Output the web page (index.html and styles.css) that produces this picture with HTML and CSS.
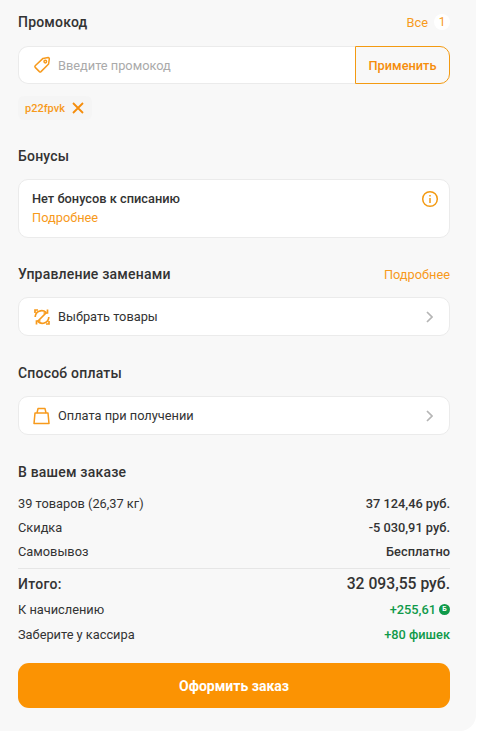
FILE: index.html
```html
<!DOCTYPE html>
<html lang="ru">
<head>
	<meta charset="UTF-8">
	<title>Заказ</title>
	<link rel="stylesheet" href="styles.css">
</head>
<body>
	<div class="panel">
		<div class="head head-promo">
			<span class="title">Промокод</span>
			<span class="all">Все <span class="count">1</span></span>
		</div>
		<div class="promo">
			<div class="promo-input">
				<svg class="icon" width="18" height="18" viewBox="0 0 18 18" fill="none" stroke="#f79a1c" stroke-width="1.5" stroke-linejoin="round"><path d="M10 2.4 L15.2 1.6 Q16.4 1.6 16.3 2.8 L15.6 8 L8 15.6 Q7.2 16.3 6.4 15.6 L2.2 11.4 Q1.5 10.6 2.2 9.8 Z"/><circle cx="12.3" cy="5.6" r="1.3"/></svg>
				<span class="placeholder">Введите промокод</span>
			</div>
			<div class="promo-btn">Применить</div>
		</div>
		<div class="chips">
			<div class="chip">
				<span>p22fpvk</span>
				<svg width="12" height="12" viewBox="0 0 12 12" fill="none" stroke="#f58d0b" stroke-width="1.8"><path d="M1 1 L11 11 M11 1 L1 11"/></svg>
			</div>
		</div>

		<div class="head head-bonus"><span class="title">Бонусы</span></div>
		<div class="card bonus">
			<div>
				<div class="bonus-title">Нет бонусов к списанию</div>
				<div class="more">Подробнее</div>
			</div>
			<svg width="18" height="18" viewBox="0 0 18 18" fill="none" stroke="#f39a12" stroke-width="1.5"><circle cx="9" cy="9" r="7.3"/><path d="M9 8 V13"/><path d="M9 5 V6.5"/></svg>
		</div>

		<div class="head head-manage">
			<span class="title">Управление заменами</span>
			<span class="more">Подробнее</span>
		</div>
		<div class="card row-link">
			<svg class="icon" width="18" height="18" viewBox="0 0 18 18" fill="none" stroke="#f79a1c" stroke-width="1.7"><path d="M2 5 V2 H5"/><path d="M2.2 9 A6.5 6.5 0 0 1 13 4.3"/><path d="M10.5 5 H14.5 V1.5"/><path d="M13.5 4.5 L4.5 13.5"/><path d="M15.8 9 A6.5 6.5 0 0 1 5 13.7"/><path d="M7.5 13 H3.5 V16.5"/><path d="M13 16 H16 V13"/></svg>
			<span class="row-text">Выбрать товары</span>
			<svg class="chev" width="7" height="12" viewBox="0 0 7 12" fill="none" stroke="#b5b5b5" stroke-width="1.7"><path d="M1 1 L6 6 L1 11"/></svg>
		</div>

		<div class="head head-section"><span class="title">Способ оплаты</span></div>
		<div class="card row-link">
			<svg class="icon" width="18" height="18" viewBox="0 0 18 18" fill="none" stroke="#f79a1c" stroke-width="1.5" stroke-linejoin="round"><path d="M2 6 H15 L16 16.6 H1 Z"/><path d="M4 6 L5 1.6 H12 L13 6"/></svg>
			<span class="row-text">Оплата при получении</span>
			<svg class="chev" width="7" height="12" viewBox="0 0 7 12" fill="none" stroke="#b5b5b5" stroke-width="1.7"><path d="M1 1 L6 6 L1 11"/></svg>
		</div>

		<div class="head head-section"><span class="title">В вашем заказе</span></div>
		<div class="summary">
			<div class="line"><span>39 товаров (26,37 кг)</span><span class="val">37 124,46 руб.</span></div>
			<div class="line"><span>Скидка</span><span class="val">-5 030,91 руб.</span></div>
			<div class="line"><span>Самовывоз</span><span class="val">Бесплатно</span></div>
			<div class="line total"><span>Итого:</span><span class="total-val">32 093,55 руб.</span></div>
			<div class="line"><span>К начислению</span><span class="val green">+255,61 <span class="coin">Б</span></span></div>
			<div class="line last"><span>Заберите у кассира</span><span class="val green">+80 фишек</span></div>
		</div>
		<div class="order">Оформить заказ</div>
	</div>
</body>
</html>
```

FILE: styles.css
```css
body{
	margin: 0;
	background: #fff;
	font-family: Roboto, "Liberation Sans", sans-serif;
	color: #333;
}

.panel{
	width: 476px;
	height: 731px;
	box-sizing: border-box;
	padding: 13px 26px 0 18px;
	background: #f8f8f8;
	border-bottom-right-radius: 16px;
}

.head{
	display: flex;
	justify-content: space-between;
	align-items: center;
	height: 18px;
}
.head-bonus{
	margin-top: 27px;
	margin-bottom: 14px;
}
.head-manage{
	margin-top: 27px;
	margin-bottom: 14px;
}
.head-section{
	margin-top: 28px;
	margin-bottom: 14px;
}
.title{
	font-size: 14px;
	font-weight: 500;
	letter-spacing: 0.2px;
	color: #333;
}

.all{
	font-size: 12.8px;
	color: #f79a1c;
	display: flex;
	align-items: center;
	gap: 6px;
}
.count{
	width: 16px;
	height: 16px;
	border-radius: 50%;
	background: #fff;
	display: inline-block;
	text-align: center;
	line-height: 16px;
	font-size: 12px;
}

.promo{
	display: flex;
	height: 38px;
	margin-top: 15px;
}
.promo-input{
	flex: 1;
	display: flex;
	align-items: center;
	padding-left: 14px;
	background: #fff;
	border: 1px solid #ebebeb;
	border-right: 0;
	border-radius: 10px 0 0 10px;
}
.placeholder{
	font-size: 12.8px;
	color: #aaa;
	margin-left: 7px;
}
.promo-btn{
	width: 95px;
	display: flex;
	align-items: center;
	justify-content: center;
	border: 1px solid #f39a12;
	border-radius: 0 10px 10px 0;
	font-size: 12.8px;
	font-weight: 500;
	color: #f58d0b;
	box-sizing: border-box;
}

.chips{
	display: flex;
	margin-top: 12px;
}
.chip{
	display: flex;
	align-items: center;
	gap: 7px;
	height: 24px;
	padding: 0 8px 0 7px;
	background: #f5f5f5;
	border-radius: 6px;
	font-size: 11px;
	font-weight: 500;
	color: #f79a1c;
}

.card{
	background: #fff;
	border: 1px solid #ebebeb;
	border-radius: 10px;
	box-sizing: border-box;
}
.bonus{
	height: 59px;
	padding: 10px 10px 0 13px;
	display: flex;
	justify-content: space-between;
	align-items: flex-start;
}
.bonus-title{
	font-size: 12.8px;
	font-weight: 500;
	line-height: 18px;
	color: #333;
}
.more{
	font-size: 12.8px;
	line-height: 19px;
	color: #f79a1c;
}

.row-link{
	height: 39px;
	display: flex;
	align-items: center;
	padding: 0 16px 0 14px;
}
.row-text{
	flex: 1;
	margin-left: 7px;
	font-size: 12.8px;
	color: #333;
}
.icon{
	flex: none;
}

.summary{
	margin-top: -4px;
}
.line{
	display: flex;
	justify-content: space-between;
	align-items: center;
	height: 24px;
	font-size: 12.8px;
	color: #333;
}
.val{
	font-weight: 500;
}
.green{
	color: #109a4a;
	display: flex;
	align-items: center;
	gap: 3px;
}
.coin{
	width: 11px;
	height: 11px;
	border-radius: 50%;
	background: #109a4a;
	color: #fff;
	font-size: 7px;
	font-weight: 700;
	line-height: 11px;
	text-align: center;
}
.total{
	height: 29px;
	margin-top: 5px;
	padding-top: 4px;
	align-items: flex-start;
	line-height: 22px;
	border-top: 1px solid #e6e6e6;
	box-sizing: border-box;
	font-size: 14px;
	font-weight: 500;
	letter-spacing: 0.3px;
}
.total-val{
	font-size: 15.7px;
	font-weight: 500;
	letter-spacing: 0;
}
.last{
	margin-top: 1px;
}

.order{
	height: 45px;
	margin-top: 17px;
	border-radius: 11px;
	background: #fb9303;
	color: #fff;
	font-size: 14px;
	font-weight: 700;
	display: flex;
	align-items: center;
	justify-content: center;
}
```
